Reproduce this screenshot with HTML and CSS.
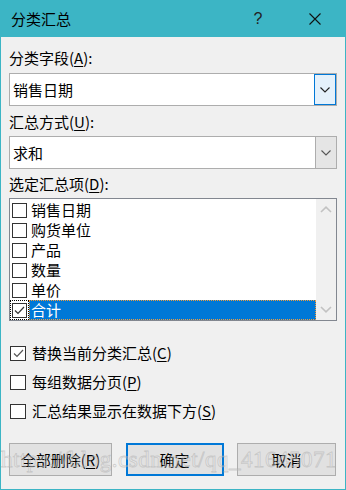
FILE: index.html
```html
<!DOCTYPE html>
<html lang="zh-CN">
<head>
    <meta charset="UTF-8">
    <title>分类汇总</title>
    <link rel="stylesheet" href="styles.css">
</head>
<body>
    <div class="dialog">
        <!-- Title bar -->
        <div class="titlebar">
            <span class="title">分类汇总</span>
            <span class="help">?</span>
            <span class="close">
                <svg width="12" height="12" viewBox="0 0 12 12"><path d="M0.5 0.5 L11.5 11.5 M11.5 0.5 L0.5 11.5" stroke="#111" stroke-width="1.1" fill="none"/></svg>
            </span>
        </div>

        <div class="content">
            <div class="field-label">分类字段(<u>A</u>):</div>
            <div class="combo active">
                <span class="combo-text">销售日期</span>
                <span class="combo-btn">
                    <svg width="10" height="6" viewBox="0 0 10 6"><path d="M0.5 0.5 L5 5 L9.5 0.5" stroke="#222" stroke-width="1.1" fill="none"/></svg>
                </span>
            </div>

            <div class="field-label second">汇总方式(<u>U</u>):</div>
            <div class="combo">
                <span class="combo-text">求和</span>
                <span class="combo-btn">
                    <svg width="10" height="6" viewBox="0 0 10 6"><path d="M0.5 0.5 L5 5 L9.5 0.5" stroke="#555" stroke-width="1.1" fill="none"/></svg>
                </span>
            </div>

            <div class="field-label third">选定汇总项(<u>D</u>):</div>
            <div class="listbox">
                <div class="list-items">
                    <div class="item"><span class="cell"><span class="box"></span></span><span class="item-text">销售日期</span></div>
                    <div class="item"><span class="cell"><span class="box"></span></span><span class="item-text">购货单位</span></div>
                    <div class="item"><span class="cell"><span class="box"></span></span><span class="item-text">产品</span></div>
                    <div class="item"><span class="cell"><span class="box"></span></span><span class="item-text">数量</span></div>
                    <div class="item"><span class="cell"><span class="box"></span></span><span class="item-text">单价</span></div>
                    <div class="item selected">
                        <span class="cell"><span class="box">
                            <svg width="13" height="13" viewBox="0 0 13 13"><path d="M2 6.5 L5 9.5 L11 3" stroke="#333" stroke-width="1.2" fill="none"/></svg>
                        </span></span>
                        <span class="item-text">合计</span>
                    </div>
                </div>
                <div class="scrollbar">
                    <svg width="12" height="7" viewBox="0 0 12 7"><path d="M1 6 L6 1.2 L11 6" stroke="#c2c2c2" stroke-width="1.6" fill="none"/></svg>
                    <svg width="12" height="7" viewBox="0 0 12 7"><path d="M1 1 L6 5.8 L11 1" stroke="#c2c2c2" stroke-width="1.6" fill="none"/></svg>
                </div>
            </div>

            <div class="options">
                <div class="option">
                    <span class="box">
                        <svg width="13" height="13" viewBox="0 0 13 13"><path d="M2 6.5 L5 9.5 L11 3" stroke="#555" stroke-width="1.2" fill="none"/></svg>
                    </span>
                    <span>替换当前分类汇总(<u>C</u>)</span>
                </div>
                <div class="option">
                    <span class="box"></span>
                    <span>每组数据分页(<u>P</u>)</span>
                </div>
                <div class="option">
                    <span class="box"></span>
                    <span>汇总结果显示在数据下方(<u>S</u>)</span>
                </div>
            </div>

            <div class="buttons">
                <button class="btn wide">全部删除(<u>R</u>)</button>
                <button class="btn default">确定</button>
                <button class="btn">取消</button>
            </div>
        </div>

        <div class="watermark">https://blog.csdn.net/qq_41645071</div>
    </div>
</body>
</html>
```

FILE: styles.css
```css
body {
    margin: 0;
    font-family: "Noto Sans CJK SC", "Noto Sans", sans-serif;
    font-size: 15px;
    color: #000;
}
.dialog {
    position: relative;
    width: 346px;
    height: 490px;
    box-sizing: border-box;
    border: 1px solid #3cb5c5;
    border-top: 0;
    background: #f0f0f0;
    display: flex;
    flex-direction: column;
    overflow: hidden;
}
.titlebar {
    height: 37px;
    flex-shrink: 0;
    background: #3cb5c5;
    display: flex;
    align-items: center;
    padding-left: 10px;
}
.title {
    flex: 1;
    line-height: 20px;
}
.help {
    width: 46px;
    text-align: center;
    font-family: "Liberation Sans", sans-serif;
    font-size: 16px;
    color: #222;
    margin-right: 11px;
}
.close {
    width: 46px;
    height: 37px;
    display: flex;
    align-items: center;
    justify-content: center;
    margin-right: 7px;
}
.content {
    flex: 1;
    display: flex;
    flex-direction: column;
    padding: 0 8px 0 8px;
}
.field-label {
    line-height: 20px;
    margin-top: 11px;
    margin-bottom: 5px;
}
.field-label.second {
    margin-top: 6px;
    margin-bottom: 4px;
}
.field-label.third {
    margin-top: 5px;
    margin-bottom: 4px;
}
u {
    text-decoration-thickness: 1px;
    text-underline-offset: 2px;
}
.combo {
    height: 33px;
    box-sizing: border-box;
    border: 1px solid #adadad;
    background: #fff;
    display: flex;
}
.combo-text {
    flex: 1;
    padding-left: 3px;
    line-height: 31px;
}
.combo-btn {
    width: 20px;
    display: flex;
    align-items: center;
    justify-content: center;
    background: #e5e5e5;
    border-left: 1px solid #adadad;
}
.combo.active .combo-btn {
    background: #e5f1fb;
    border: 1px solid #0078d7;
}
.listbox {
    height: 123px;
    box-sizing: border-box;
    border: 1px solid #828790;
    background: #fff;
    display: flex;
}
.list-items {
    flex: 1;
    padding-top: 1px;
}
.item {
    height: 20px;
    display: flex;
    align-items: stretch;
}
.cell {
    width: 19px;
    display: flex;
    align-items: center;
    justify-content: center;
    box-sizing: border-box;
}
.box {
    width: 15px;
    height: 15px;
    box-sizing: border-box;
    border: 1px solid #333;
    background: #fff;
    display: flex;
    align-items: center;
    justify-content: center;
}
.item-text {
    flex: 1;
    padding-left: 2px;
    line-height: 20px;
}
.item.selected .cell {
    border: 1px dotted #000;
}
.item.selected .item-text {
    background: #0078d7;
    color: #fff;
    box-sizing: border-box;
    border: 1px dotted #f39c3a;
    line-height: 18px;
    padding-left: 1px;
}
.scrollbar {
    width: 20px;
    background: #f0f0f0;
    display: flex;
    flex-direction: column;
    justify-content: space-between;
    align-items: center;
    padding: 7px 0 7px;
}
.options {
    margin-top: 22px;
    display: flex;
    flex-direction: column;
    gap: 9px;
}
.option {
    display: flex;
    align-items: center;
    gap: 6px;
    line-height: 20px;
    padding-left: 1px;
}
.option .box {
    width: 16px;
    height: 15px;
}
.buttons {
    margin-top: 22px;
    display: flex;
    justify-content: space-between;
    padding-right: 1px;
}
.btn {
    font-family: "Noto Sans CJK SC", "Noto Sans", sans-serif;
    font-size: 15px;
    color: #000;
    height: 33px;
    width: 99px;
    background: #e1e1e1;
    border: 1px solid #adadad;
    padding: 0;
}
.btn.wide {
    width: 103px;
}
.btn.default {
    width: 98px;
    border: 2px solid #0078d7;
}
.watermark {
    position: absolute;
    left: 0;
    top: 447px;
    font-family: "Liberation Serif", serif;
    font-size: 23px;
    letter-spacing: 0.5px;
    color: rgba(255, 255, 255, 0.2);
    -webkit-text-stroke: 0.8px rgba(170, 170, 170, 0.5);
    white-space: nowrap;
    pointer-events: none;
}
```
